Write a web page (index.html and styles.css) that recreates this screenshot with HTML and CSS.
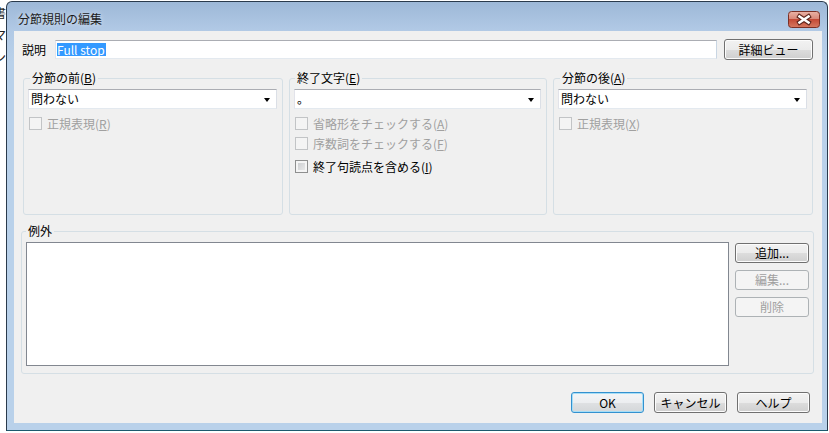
FILE: index.html
```html
<!DOCTYPE html>
<html lang="ja">
<head>
<meta charset="utf-8">
<title>分節規則の編集</title>
<link rel="stylesheet" href="styles.css">
</head>
<body>
<div class="desktop">
  <div class="behind"><span>書</span><span>マ</span><span>ン</span></div>
  <div class="window">
    <div class="titlebar">
      <span class="title">分節規則の編集</span>
      <div class="close">
        <svg width="32" height="17" viewBox="0 0 32 17">
          <defs>
            <linearGradient id="cg" x1="0" y1="0" x2="0" y2="1">
              <stop offset="0" stop-color="#eab3a6"/>
              <stop offset="0.45" stop-color="#d9897a"/>
              <stop offset="0.5" stop-color="#c44a36"/>
              <stop offset="1" stop-color="#d67a62"/>
            </linearGradient>
          </defs>
          <rect x="0.5" y="0.5" width="31" height="16" rx="3" fill="url(#cg)" stroke="#7b3026"/>
          <path d="M11.5 5.5 L20.5 11.5 M20.5 5.5 L11.5 11.5" stroke="#5b2219" stroke-width="4.6" stroke-linecap="square" fill="none"/>
          <path d="M11.5 5.5 L20.5 11.5 M20.5 5.5 L11.5 11.5" stroke="#ffffff" stroke-width="2.6" stroke-linecap="square" fill="none"/>
        </svg>
      </div>
    </div>
    <div class="frame">
      <div class="client">
        <div class="desc-row">
          <span class="desc-label">説明</span>
          <div class="textbox"><span class="sel">Full stop</span></div>
          <button class="btn btn-detail">詳細ビュー</button>
        </div>

        <div class="groups">
          <fieldset class="group">
            <legend>分節の前(<u>B</u>)</legend>
            <div class="gbody">
              <div class="combo"><span>問わない</span><span class="arrow"></span></div>
              <div class="check disabled r1"><span class="box"></span><span>正規表現(<u>R</u>)</span></div>
            </div>
          </fieldset>
          <fieldset class="group g2">
            <legend>終了文字(<u>E</u>)</legend>
            <div class="gbody">
              <div class="combo"><span>。</span><span class="arrow"></span></div>
              <div class="check disabled r1"><span class="box"></span><span>省略形をチェックする(<u>A</u>)</span></div>
              <div class="check disabled r2"><span class="box"></span><span>序数詞をチェックする(<u>F</u>)</span></div>
              <div class="check r3"><span class="box on"></span><span>終了句読点を含める(<u>I</u>)</span></div>
            </div>
          </fieldset>
          <fieldset class="group">
            <legend>分節の後(<u>A</u>)</legend>
            <div class="gbody">
              <div class="combo"><span>問わない</span><span class="arrow"></span></div>
              <div class="check disabled r1"><span class="box"></span><span>正規表現(<u>X</u>)</span></div>
            </div>
          </fieldset>
        </div>

        <fieldset class="group exc">
          <legend>例外</legend>
          <div class="exc-body">
            <div class="listbox"></div>
            <div class="side">
              <button class="btn side-btn">追加...</button>
              <button class="btn side-btn disabled">編集...</button>
              <button class="btn side-btn disabled">削除</button>
            </div>
          </div>
        </fieldset>

        <div class="footer">
          <button class="btn foot-btn default">OK</button>
          <button class="btn foot-btn">キャンセル</button>
          <button class="btn foot-btn">ヘルプ</button>
        </div>
      </div>
    </div>
  </div>
</div>
</body>
</html>
```

FILE: styles.css
```css
html, body {
  margin: 0;
  padding: 0;
}
body {
  width: 829px;
  height: 433px;
  overflow: hidden;
  background: #ffffff;
  font-family: "Noto Sans CJK JP", "Noto Sans", sans-serif;
  font-size: 12px;
  line-height: 14px;
  color: #000;
}
.desktop {
  display: flex;
  align-items: flex-start;
  padding-top: 1px;
}
.behind {
  width: 6px;
  height: 432px;
  overflow: hidden;
  background: #fff;
  display: flex;
  flex-direction: column;
  padding-top: 1px;
  box-sizing: border-box;
}
.behind span {
  display: block;
  line-height: 22px;
  margin-left: -6px;
  color: #222;
}
.window {
  width: 822px;
  height: 430px;
  box-sizing: border-box;
  border: 1px solid #2a3a4c;
  border-bottom-color: #1d5a6e;
  border-radius: 6px 6px 0 0;
  background: linear-gradient(#9db8d7 0px, #b1c9e5 28px, #b9d1ea 60px, #b9d1ea 100%);
  display: flex;
  flex-direction: column;
}
.titlebar {
  height: 29px;
  flex: none;
  display: flex;
  justify-content: space-between;
  align-items: flex-start;
  padding: 0 7px 0 11px;
}
.title {
  margin-top: 10px;
  color: #1b1b1b;
  text-shadow: 0 0 5px rgba(255, 255, 255, 0.7);
}
.close {
  margin-top: 9px;
  width: 32px;
  height: 17px;
  line-height: 0;
}
.frame {
  flex: 1;
  display: flex;
  padding: 0 5px 7px 7px;
}
.client {
  flex: 1;
  background: #f0f0f0;
  padding-top: 8px;
}
.desc-row {
  display: flex;
  align-items: center;
  height: 21px;
  padding-left: 8px;
}
.desc-label {
  width: 33px;
}
.textbox {
  width: 662px;
  height: 19px;
  box-sizing: border-box;
  margin-right: 7px;
  background: #fff;
  border: 1px solid;
  border-color: #abadb3 #c9d6e3 #e3e9ef #e2e3ea;
  padding-left: 1px;
  display: flex;
  align-items: center;
}
.sel {
  background: #3399ff;
  color: #fff;
  line-height: 13px;
  padding: 0 1px 0 0;
}
.btn {
  font: inherit;
  color: #000;
  height: 21px;
  box-sizing: border-box;
  padding: 0;
  border: 1px solid #707070;
  border-radius: 3px;
  background: linear-gradient(#f2f2f2 0%, #ebebeb 50%, #dddddd 50%, #cfcfcf 100%);
  box-shadow: inset 0 0 0 1px #fcfcfc;
  text-align: center;
}
.btn.disabled {
  border-color: #adb2b5;
  background: #f4f4f4;
  color: #a0a0a0;
  box-shadow: none;
}
.btn.default {
  border-color: #3391cf;
  box-shadow: inset 0 0 0 1px #a6def7;
  background: linear-gradient(#f3f5f7 0%, #eceef0 50%, #dfe1e3 50%, #d4d7d9 100%);
}
.btn-detail {
  width: 89px;
}
.groups {
  display: grid;
  grid-template-columns: 260px 258px 260px;
  column-gap: 6px;
  margin: 11px 0 0 9px;
  width: 790px;
}
.group {
  margin: 0;
  padding: 0;
  min-width: 0;
  border: 1px solid #d5dfe5;
  border-radius: 3px;
  height: 144px;
  box-sizing: border-box;
}
.group legend {
  padding: 0 2px;
  margin-left: 6px;
  line-height: 14px;
}
.g2 legend {
  margin-left: 5px;
}
.gbody {
  padding: 4px 5px 0 4px;
}
.combo {
  height: 20px;
  box-sizing: border-box;
  background: #fff;
  border: 1px solid;
  border-color: #abadb3 #dbdfe6 #e3e9ef #e2e3ea;
  display: flex;
  align-items: center;
  justify-content: space-between;
  padding: 0 6px 0 2px;
}
.arrow {
  width: 0;
  height: 0;
  border-left: 3.5px solid transparent;
  border-right: 3.5px solid transparent;
  border-top: 4px solid #000;
  margin-top: 1px;
}
.check {
  display: flex;
  align-items: center;
  gap: 5px;
  height: 13px;
  margin-left: 1px;
}
.check.r1 { margin-top: 8px; }
.check.r2 { margin-top: 7px; }
.check.r3 { margin-top: 10px; }
.check.disabled {
  color: #a0a0a0;
}
.box {
  width: 13px;
  height: 13px;
  box-sizing: border-box;
  border: 1px solid #c2c4c6;
  background: #f4f4f4;
  flex: none;
}
.box.on {
  border-color: #8e8f8f;
  background: linear-gradient(135deg, #c6c8cb, #eeeeee);
  box-shadow: inset 0 0 0 2px #f4f4f4;
}
.exc {
  width: 793px;
  height: 150px;
  margin: 9px 0 0 7px;
}
.exc legend {
  margin-left: 4px;
}
.exc-body {
  display: flex;
  gap: 6px;
  padding: 4px 4px 7px 4px;
}
.listbox {
  width: 703px;
  height: 124px;
  box-sizing: border-box;
  background: #fff;
  border: 1px solid #828790;
}
.side {
  width: 74px;
  display: flex;
  flex-direction: column;
  gap: 7px;
  padding-top: 1px;
}
.side-btn {
  width: 74px;
  height: 20px;
}
.footer {
  display: flex;
  justify-content: flex-end;
  gap: 10px;
  margin-top: 18px;
  padding-right: 12px;
}
.foot-btn {
  width: 73px;
}
```
